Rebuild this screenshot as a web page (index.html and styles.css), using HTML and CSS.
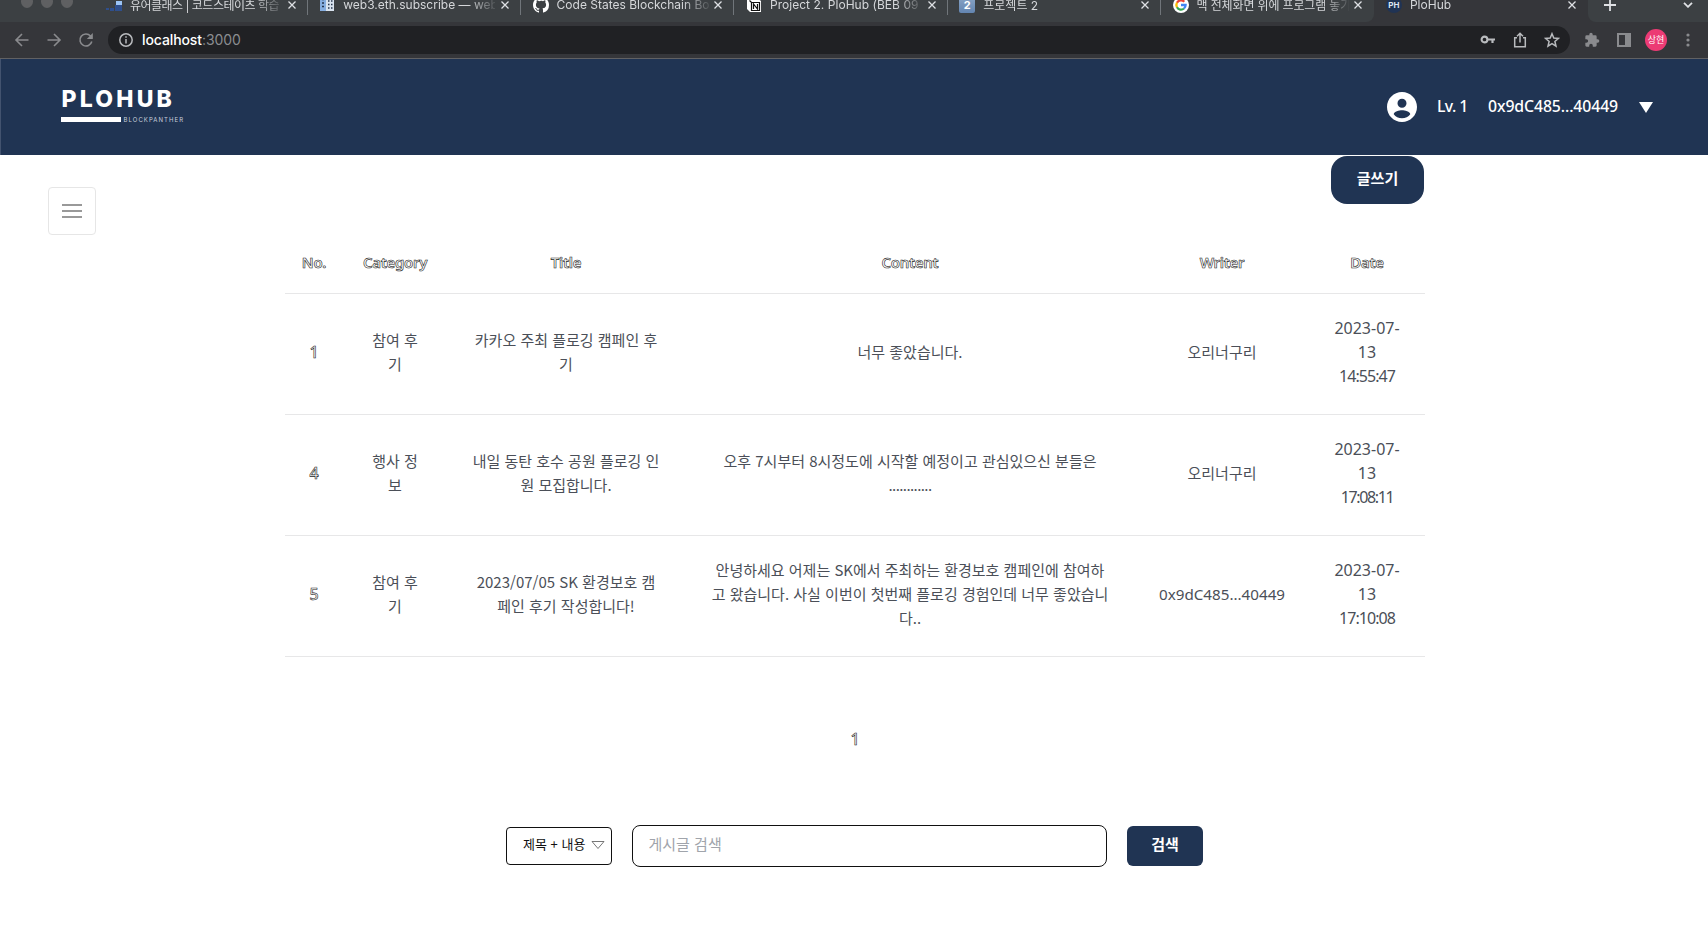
FILE: index.html
```html
<!DOCTYPE html>
<html lang="ko">
<head>
<meta charset="utf-8">
<title>PloHub</title>
<link rel="stylesheet" href="styles.css">
</head>
<body>
<div class="browser">
  <div class="tabs">
    <div class="lights"><i></i><i></i><i></i></div>
    <div class="tab"><svg class="fav" viewBox="0 0 16 16"><path fill="#2f4f8c" d="M9 8h7v6H9zM4 11h4v3H4zM0 11h3v2H0z"/><path fill="#9cc4f5" d="M10 4h6v4h-6z"/></svg><span class="name tight">유어클래스 | 코드스테이츠 학습</span><svg class="x" viewBox="0 0 8 8"><path d="M.5.5l7 7m0-7l-7 7"/></svg></div>
    <div class="tab"><svg class="fav" viewBox="0 0 16 16"><path fill="#86aee0" d="M1 0h6v14H1z"/><path fill="#d9e3ef" d="M7 0h8v14H7z"/><path stroke="#26364d" stroke-width="1.4" d="M3 2.5h2M3 6h2M3 9.5h2M9 4h1.500m1.500 0H13.500M9 7.500h1.500m1.500 0H13.500M9 11h1.500m1.500 0H13.500"/></svg><span class="name">web3.eth.subscribe — web</span><svg class="x" viewBox="0 0 8 8"><path d="M.5.5l7 7m0-7l-7 7"/></svg></div>
    <div class="tab"><svg class="fav" viewBox="0 0 16 16"><path fill="#fff" d="M8 0C3.58 0 0 3.58 0 8c0 3.54 2.29 6.53 5.47 7.59.4.07.55-.17.55-.38 0-.19-.01-.82-.01-1.49-2.01.37-2.53-.49-2.69-.94-.09-.23-.48-.94-.82-1.13-.28-.15-.68-.52-.01-.53.63-.01 1.08.58 1.23.82.72 1.21 1.87.87 2.33.66.07-.52.28-.87.51-1.07-1.78-.2-3.64-.89-3.64-3.95 0-.87.31-1.59.82-2.15-.08-.2-.36-1.02.08-2.12 0 0 .67-.21 2.2.82A7.6 7.6 0 0 1 8 3.87c.68 0 1.36.09 2 .27 1.53-1.04 2.2-.82 2.2-.82.44 1.1.16 1.92.08 2.12.51.56.82 1.27.82 2.15 0 3.07-1.87 3.75-3.65 3.95.29.25.54.73.54 1.48 0 1.07-.01 1.93-.01 2.2 0 .21.15.46.55.38A8 8 0 0 0 16 8c0-4.42-3.58-8-8-8z"/></svg><span class="name">Code States Blockchain Bo</span><svg class="x" viewBox="0 0 8 8"><path d="M.5.5l7 7m0-7l-7 7"/></svg></div>
    <div class="tab"><svg class="fav" viewBox="0 0 16 16"><path fill="#fff" d="M1 1h10l4 3v11H4l-3-3z"/><path fill="none" stroke="#111" stroke-width="1.2" d="M3.500 3.500l2 2h8v8h-8v-8M7.500 12V7l4 5V7"/></svg><span class="name proj">Project 2. PloHub (BEB 09</span><svg class="x" viewBox="0 0 8 8"><path d="M.5.5l7 7m0-7l-7 7"/></svg></div>
    <div class="tab"><span class="fav two">2</span><span class="name kr">프로젝트 2</span><svg class="x" viewBox="0 0 8 8"><path d="M.5.5l7 7m0-7l-7 7"/></svg></div>
    <div class="tab last"><svg class="fav" viewBox="0 0 16 16"><circle cx="8" cy="8" r="8" fill="#fff"/><g fill="none" stroke-width="2.300"><path stroke="#ea4335" d="M4 5.700A4.600 4.600 0 0 1 11.300 4.800"/><path stroke="#fbbc05" d="M4 10.300A4.600 4.600 0 0 1 4 5.700"/><path stroke="#34a853" d="M11 11.500A4.600 4.600 0 0 1 4 10.300"/><path stroke="#4285f4" d="M8 8h4.600A4.600 4.600 0 0 1 11 11.500"/></g></svg><span class="name snug">맥 전체화면 위에 프로그램 놓기</span><svg class="x" viewBox="0 0 8 8"><path d="M.5.5l7 7m0-7l-7 7"/></svg></div>
    <div class="tab active"><span class="fav ph">PH</span><span class="name">PloHub</span><svg class="x" viewBox="0 0 8 8"><path d="M.5.5l7 7m0-7l-7 7"/></svg></div>
    <div class="tab-end">
      <svg width="12" height="12" viewBox="0 0 12 12"><path d="M6 0v12M0 6h12"/></svg>
      <svg width="10" height="6" viewBox="0 0 10 6"><path d="M1 .8l4 4 4-4"/></svg>
    </div>
  </div>
  <div class="toolbar">
    <div class="nav">
      <svg width="16" height="16" viewBox="0 0 16 16"><path d="M14.500 8H2M8 2L2 8l6 6"/></svg>
      <svg width="16" height="16" viewBox="0 0 16 16"><path d="M1.500 8H14M8 2l6 6-6 6"/></svg>
      <svg width="16" height="16" viewBox="0 0 16 16"><path d="M13.800 9.500A6 6 0 1 1 12.500 4L14 5.500"/><path fill="#8a8b8e" stroke="none" d="M14.800 1v6h-6z"/></svg>
    </div>
    <div class="url">
      <svg width="14" height="14" viewBox="0 0 14 14"><circle cx="7" cy="7" r="6.200"/><path d="M7 6v4.500M7 3.300v1.500"/></svg>
      <span class="address"><b>localhost</b>:3000</span>
      <div class="url-icons">
        <svg width="16" height="16" viewBox="0 0 16 16"><circle cx="4.500" cy="7.500" r="2.900" stroke-width="2.100"/><path stroke-width="2.200" d="M7.500 7.500H15M12.500 7.500V11"/></svg>
        <svg width="16" height="16" viewBox="0 0 16 16"><path d="M5 5.700H2.700v9h10.600v-9H11M8 10.500V1.500M5 4.300l3-3 3 3"/></svg>
        <svg width="16" height="16" viewBox="0 0 16 16"><path d="M8 1.700l1.800 4.300 4.700.4-3.600 3.100 1.100 4.600L8 11.700l-4 2.400 1.100-4.600-3.600-3.100 4.700-.4z"/></svg>
      </div>
    </div>
    <div class="ext">
      <svg width="16" height="16" viewBox="0 0 24 24"><path fill="#8a8b8e" d="M20.500 11H19V7a2 2 0 0 0-2-2h-4V3.500a2.500 2.500 0 0 0-5 0V5H4a2 2 0 0 0-2 2v3.800h1.500a2.700 2.700 0 0 1 0 5.400H2V20c0 1.100.9 2 2 2h3.800v-1.500a2.700 2.700 0 0 1 5.400 0V22H17a2 2 0 0 0 2-2v-4h1.500a2.500 2.500 0 0 0 0-5z"/></svg>
      <svg width="16" height="16" viewBox="0 0 16 16"><path fill="#8a8b8e" fill-rule="evenodd" d="M1 1h14v14H1zM3 3v10h6V3z"/></svg>
      <span class="me">상현</span>
      <svg width="16" height="16" viewBox="0 0 16 16"><g fill="#8a8b8e"><circle cx="8" cy="3" r="1.600"/><circle cx="8" cy="8" r="1.600"/><circle cx="8" cy="13" r="1.600"/></g></svg>
    </div>
  </div>
</div>
<header class="header">
  <div class="logo">
    <div class="logo-name">PLOHUB</div>
    <div class="logo-sub"><i></i><span>BLOCKPANTHER</span></div>
  </div>
  <div class="user">
    <svg class="user-icon" width="30" height="30" viewBox="2 2 20 20"><path fill="#fff" d="M12 2C6.480 2 2 6.480 2 12s4.480 10 10 10 10-4.480 10-10S17.520 2 12 2zm0 4.500a3 3 0 1 1 0 6 3 3 0 0 1 0-6zm0 13c-2.300 0-4.300-1-5.500-2.700.03-1.800 3.700-2.600 5.500-2.600s5.470.8 5.500 2.600C16.300 18.500 14.300 19.500 12 19.500z"/></svg>
    <span class="level">Lv. 1</span>
    <span class="wallet">0x9dC485...40449</span>
    <svg width="14" height="11" viewBox="0 0 14 11"><path fill="#fff" d="M0 0h14L7 11z"/></svg>
  </div>
</header>
<main>
  <button class="menu"><i></i><i></i><i></i></button>
  <section class="board">
    <button class="write">글쓰기</button>
    <table>
      <colgroup><col class="c1"><col class="c2"><col class="c3"><col class="c4"><col class="c5"><col class="c6"></colgroup>
      <thead><tr><th>No.</th><th>Category</th><th>Title</th><th>Content</th><th>Writer</th><th>Date</th></tr></thead>
      <tbody>
        <tr><td class="no">1</td><td>참여 후<br>기</td><td>카카오 주최 플로깅 캠페인 후<br>기</td><td>너무 좋았습니다.</td><td>오리너구리</td><td class="date">2023-07-<br>13<br><span class="time">14:55:47</span></td></tr>
        <tr><td class="no">4</td><td>행사 정<br>보</td><td>내일 동탄 호수 공원 플로깅 인<br>원 모집합니다.</td><td>오후 7시부터 8시정도에 시작할 예정이고 관심있으신 분들은<br><span class="dots">............</span></td><td>오리너구리</td><td class="date">2023-07-<br>13<br><span class="time eleven">17:08:11</span></td></tr>
        <tr><td class="no">5</td><td>참여 후<br>기</td><td>2023/07/05 SK 환경보호 캠<br>페인 후기 작성합니다!</td><td>안녕하세요 어제는 SK에서 주최하는 환경보호 캠페인에 참여하<br>고 왔습니다. 사실 이번이 첫번째 플로깅 경험인데 너무 좋았습니<br>다..</td><td class="addr">0x9dC485...40449</td><td class="date">2023-07-<br>13<br><span class="time">17:10:08</span></td></tr>
      </tbody>
    </table>
    <div class="pages">1</div>
    <form class="search">
      <div class="select"><span>제목 + 내용</span><svg width="14" height="8" viewBox="0 0 14 8"><path fill="#fff" stroke="#555" stroke-width=".8" d="M1 .5h12L7 7.500z"/></svg></div>
      <input type="text" placeholder="게시글 검색">
      <button type="button" class="go">검색</button>
    </form>
  </section>
</main>
</body>
</html>
```
FILE: styles.css
```css
* { box-sizing: border-box; }
body {
  margin: 0;
  width: 1708px;
  height: 946px;
  overflow: hidden;
  background: #fff;
  font-family: "Noto Sans CJK KR", "Noto Sans", sans-serif;
  font-size: 15px;
  line-height: 24px;
  color: #4b4f58;
}
button { border: 0; padding: 0; font: inherit; }
svg { display: block; flex: none; }

/* browser frame */
.browser { height: 59px; background: #35363a; border-bottom: 1px solid #616163; overflow: hidden; }
.tabs {
  display: flex;
  height: 34px;
  margin-top: -12px;
  background: linear-gradient(90deg, #3c4043 1300px, #35363a 1300px);
  font: 12px/34px Inter, "Noto Sans CJK KR", sans-serif;
  color: #d5d7da;
}
.lights { display: flex; gap: 8px; width: 94.400px; padding: 7px 0 0 21px; flex: none; }
.lights i { width: 12px; height: 13px; border-radius: 50%; background: #5f6062; }
.tab { position: relative; display: flex; align-items: center; width: 213.350px; padding: 0 12px 0 11.500px; flex: none; }
.tab::after { content: ""; position: absolute; right: 0; top: 7px; height: 20px; width: 1px; background: #70757a; }
.tab.last::after, .tab.active::after { display: none; }
.tab.last { border-radius: 0 0 8px 0; background: #3c4043; }
.tab.active { background: #35363a; }
.fav { width: 16px; height: 16px; margin-right: 8px; flex: none; }
.name { width: 152px; overflow: hidden; white-space: nowrap; mask-image: linear-gradient(90deg, #000 125px, transparent 156px); }
.tight { letter-spacing: -.5px; }
.snug { letter-spacing: -.15px; }
.proj { letter-spacing: .04px; }
.tight, .snug, .kr { padding-top: 2px; }
.x { width: 8px; height: 8px; margin-left: auto; overflow: visible; }
.x path, .tab-end path { fill: none; stroke: #dfe1e5; stroke-width: 1.300; }
.tab-end path { stroke-width: 1.800; }
.two { background: linear-gradient(#89a4c5, #6385b1); color: #fff; font-size: 11px; line-height: 16px; font-weight: 700; text-align: center; border-radius: 2px; }
.ph { background: #203354; color: #dfe6f2; font-size: 8px; line-height: 16px; font-weight: 700; text-align: center; border-radius: 50%; }
.tab-end { flex: 1; display: flex; align-items: center; justify-content: space-between; padding: 0 15px 0 16px; background: #3c4043; border-radius: 0 0 0 8px; }

.toolbar { display: flex; align-items: center; height: 36px; }
.nav { display: flex; gap: 16px; width: 108px; padding-left: 14px; }
.nav path { fill: none; stroke: #8a8b8e; stroke-width: 1.600; }
.nav path[stroke="none"] { fill: #8a8b8e; stroke: none; }
.url { display: flex; align-items: center; width: 1462px; height: 28px; padding: 0 10px 0 11px; border-radius: 14px; background: #202124; }
.url svg { fill: none; stroke: #b9bbbe; stroke-width: 1.500; }
.address { margin-left: 9px; font: 14px/28px Inter, sans-serif; letter-spacing: -.1px; color: #8b8d90; }
.address b { color: #fff; font-weight: 500; }
.url-icons { display: flex; gap: 16px; margin-left: auto; }
.ext { display: flex; align-items: center; padding-left: 14px; gap: 13px; }
.ext svg:first-child { margin-right: 3px; }
.me { width: 22px; height: 22px; border-radius: 50%; background: #ec3b74; color: #fff; font-size: 9px; line-height: 22px; text-align: center; white-space: nowrap; }

/* page header */
.header { display: flex; justify-content: space-between; height: 96px; padding: 0 55px 0 59.500px; background: #203453; border-left: 1px solid #43536f; color: #fff; }
.logo { padding-top: 30px; }
.logo-name { height: 21px; padding-left: 1px; font: 800 23px/21px Inter, sans-serif; letter-spacing: 3.200px; }
.logo-sub { display: flex; align-items: center; gap: 3px; margin-top: 7px; height: 5px; }
.logo-sub i { width: 60px; height: 5px; background: #fff; }
.logo-sub span { font: 6px/5px Inter, sans-serif; letter-spacing: 1.050px; color: #c7cedb; }
.user { display: flex; align-items: center; font: 500 15.800px/24px "Noto Sans", sans-serif; }
.level { margin: 0 20px; width: 31px; white-space: nowrap; letter-spacing: -.6px; }
.wallet { margin-right: 20px; width: 131px; white-space: nowrap; letter-spacing: -.1px; }
.level, .wallet { position: relative; top: -1px; }

/* board */
main { position: relative; }
.menu { position: absolute; left: 48px; top: 32px; width: 48px; height: 48px; display: flex; flex-direction: column; align-items: center; justify-content: center; gap: 4px; background: #fff; border: 1px solid #e6e6e6; border-radius: 4px; }
.menu i { width: 20px; height: 2px; background: #999; }
.board { width: 1140px; margin-left: 285px; display: flex; flex-direction: column; }
.write { align-self: flex-end; width: 93px; height: 48px; margin: 1px 1px 0 0; padding-bottom: 4px; border-radius: 16px; background: #203453; color: #fff; font-weight: 700; }
table { width: 1140px; margin-top: 28px; table-layout: fixed; border-collapse: collapse; text-align: center; }
.c1 { width: 58px; } .c2 { width: 104px; } .c3 { width: 238px; }
.c4 { width: 450px; } .c5 { width: 174px; } .c6 { width: 116px; }
th, td { padding: 0; border-bottom: 1px solid #e7e7e8; }
th { height: 61px; }
td { height: 121px; padding-bottom: 4px; white-space: nowrap; }
th, .no, .pages { font-family: "Noto Sans", sans-serif; color: #fff; -webkit-text-stroke: .6px #222; font-weight: 600; font-size: 15px; letter-spacing: -.3px; }
.no, .pages { font-size: 16px; font-weight: 500; }
.date { font: 16px/24px "Noto Sans", sans-serif; }
.time { letter-spacing: -.95px; }
.eleven { letter-spacing: -1.400px; }
.dots { letter-spacing: -.6px; }
.addr { font: 15.200px/24px "Noto Sans", sans-serif; }
.pages { margin-top: 70px; text-align: center; }
.search { display: flex; align-items: center; margin-top: 74px; padding-left: 221px; }
.select { display: flex; align-items: center; justify-content: space-between; width: 106px; height: 38px; padding: 0 6px 3px 16px; border: 1px solid #111; border-radius: 4px; color: #111; font-size: 13px; white-space: nowrap; }
.select svg { position: relative; top: 1px; }
.search input { width: 475px; height: 42px; margin: 0 20.500px 0 19.500px; padding: 0 16px 4px; border: 1px solid #111; border-radius: 8px; font: inherit; }
.search input::placeholder { color: #a0a4ab; }
.go { width: 76px; height: 40px; padding-bottom: 3px; border-radius: 6px; background: #203453; color: #fff; font-weight: 700; }
```
